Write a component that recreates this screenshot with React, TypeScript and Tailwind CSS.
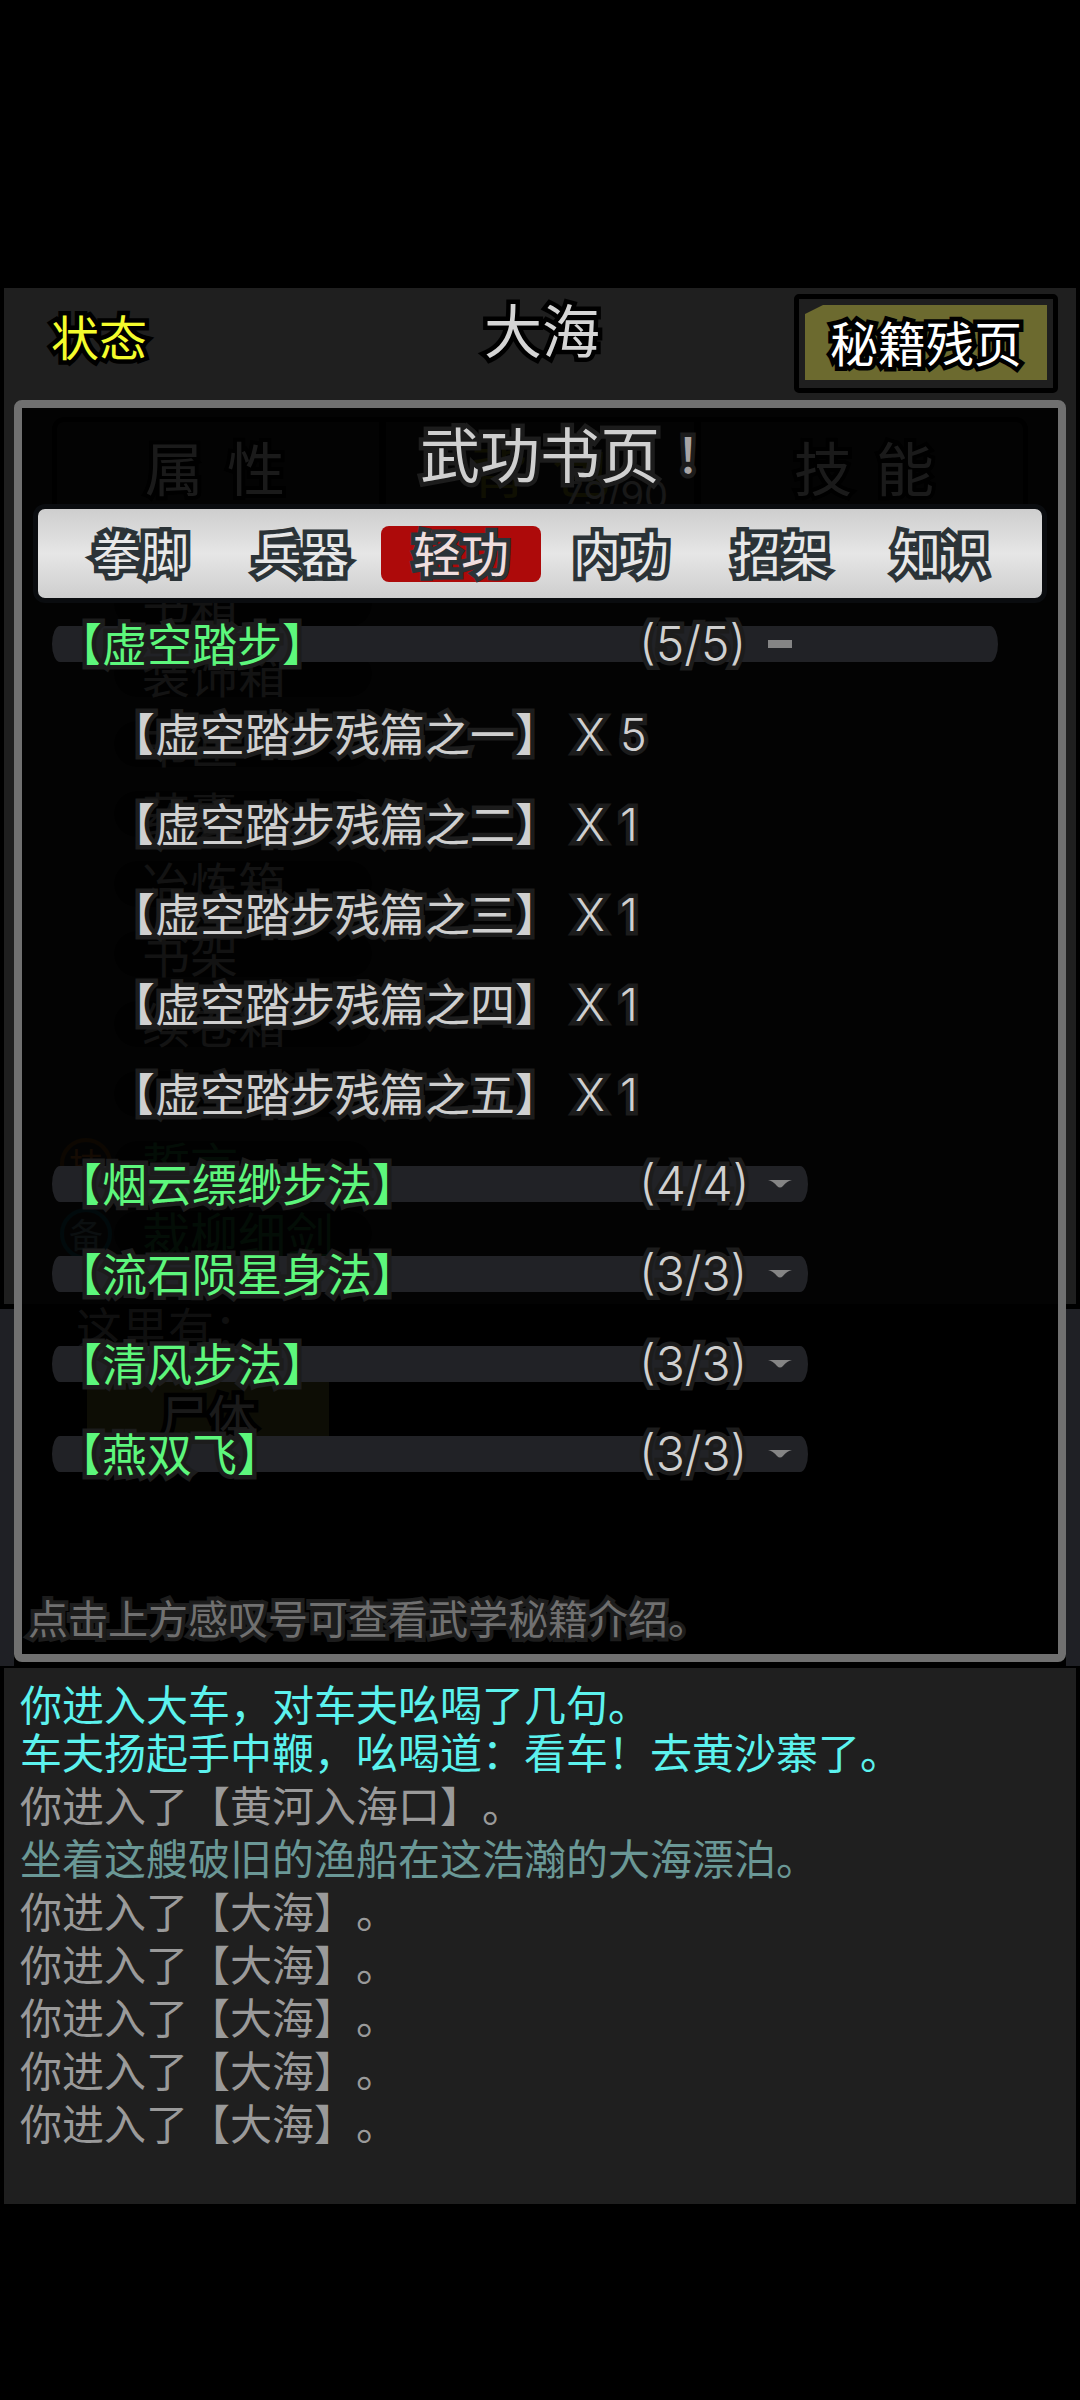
import { useState } from "react";

const outline = "[paint-order:stroke_fill] [text-spacing-trim:space-all] whitespace-nowrap leading-none";

const tabs = ["拳脚", "兵器", "轻功", "内功", "招架", "知识"];

const books = [
  {
    name: "虚空踏步",
    count: "(5/5)",
    pages: [
      { part: "一", owned: 5 },
      { part: "二", owned: 1 },
      { part: "三", owned: 1 },
      { part: "四", owned: 1 },
      { part: "五", owned: 1 },
    ],
  },
  { name: "烟云缥缈步法", count: "(4/4)", pages: [] },
  { name: "流石陨星身法", count: "(3/3)", pages: [] },
  { name: "清风步法", count: "(3/3)", pages: [] },
  { name: "燕双飞", count: "(3/3)", pages: [] },
];

const bag = [
  { label: "书箱", color: "text-[#9a9a9a]" },
  { label: "装饰箱", color: "text-[#9a9a9a]" },
  { label: "书匣", color: "text-[#9a9a9a]" },
  { label: "药囊", color: "text-[#9a9a9a]" },
  { label: "冶炼箱", color: "text-[#9a9a9a]" },
  { label: "书架", color: "text-[#9a9a9a]" },
  { label: "续卷箱", color: "text-[#9a9a9a]" },
  { label: "", color: "text-[#9a9a9a]" },
  { label: "誓言", color: "text-[#1f6a35]", badge: "技", badgeColor: "border-[#6a3c08] text-[#a85a18]" },
  { label: "裁柳细剑", color: "text-[#1f6a35]", badge: "备", badgeColor: "border-[#0c5460] text-[#5a7a86]" },
];

const log = [
  { text: "你进入大车，对车夫吆喝了几句。\n车夫扬起手中鞭，吆喝道：看车！去黄沙寨了。", color: "text-[#5cf2ee]" },
  { text: "你进入了【黄河入海口】。", color: "text-[#9a9a9a]" },
  { text: "坐着这艘破旧的渔船在这浩瀚的大海漂泊。", color: "text-[#6a9896]" },
  { text: "你进入了【大海】。", color: "text-[#9a9a9a]" },
  { text: "你进入了【大海】。", color: "text-[#9a9a9a]" },
  { text: "你进入了【大海】。", color: "text-[#9a9a9a]" },
  { text: "你进入了【大海】。", color: "text-[#9a9a9a]" },
  { text: "你进入了【大海】。", color: "text-[#9a9a9a]" },
];

function PlaqueButton({ label, tone }: { label: string; tone: string }) {
  return (
    <button
      className={`flex h-[99px] w-[264px] shrink-0 rounded-[5px] border-[5px] border-black px-[6px] pt-[6px] pb-[8px] text-[48px] ${tone}`}
    >
      <span className="flex h-full w-full items-center justify-center bg-[#6c6a2f] pb-1 [clip-path:polygon(18px_0,100%_0,100%_100%,0_100%,0_9px)]">
        <span className={`${outline} [-webkit-text-stroke:9px_#000]`}>{label}</span>
      </span>
    </button>
  );
}

function Header() {
  return (
    <header className="grid h-[112px] grid-cols-3 items-start px-[18px]">
      <button className={`${outline} mt-[23px] ml-[29px] justify-self-start text-[48px] text-[#f4fc2c] [-webkit-text-stroke:9px_#000]`}>
        状态
      </button>
      <h1 className={`${outline} mt-[11px] ml-1 justify-self-center text-[58px] text-[#d4d4d4] [-webkit-text-stroke:9px_#000]`}>
        大海
      </h1>
      <div className="mt-[6px] justify-self-end">
        <PlaqueButton label="秘籍残页" tone="text-white" />
      </div>
    </header>
  );
}

function Scene() {
  return (
    <div className="flex flex-col [grid-area:1/1]">
      <div className="mx-1 bg-[#1f1f1f]">
        <Header />
        <div className="mx-[48px] mt-[17px] grid h-[143px] grid-cols-3 rounded-[12px] border-[5px] border-black text-[58px] text-[#d4d4d4]">
          <span className={`${outline} flex justify-center gap-6 pt-[15px] pr-[6px] [-webkit-text-stroke:8px_#000]`}>
            <span>属</span>
            <span>性</span>
          </span>
          <span
            className={`${outline} relative flex justify-center gap-6 border-x-[7px] border-black pt-[17px] text-[#7a7a14]`}
          >
            <span>背</span>
            <span>包</span>
            <span className="absolute top-[54px] right-[26px] font-['Inter',sans-serif] text-[38px] text-[#c4c4c4]">
              79/90
            </span>
          </span>
          <span className={`${outline} flex justify-center gap-6 pt-[15px] pl-1 [-webkit-text-stroke:8px_#000]`}>
            <span>技</span>
            <span>能</span>
          </span>
        </div>
        <ul className="mt-[9px] pb-[35px] pl-[56px] text-[48px]">
          {bag.map((item, i) => (
            <li key={i} className="flex h-[70px] items-center">
              <span className="w-[54px]">
                {item.badge && (
                  <span
                    className={`flex size-[52px] items-center justify-center rounded-full border-[4px] text-[34px] leading-none ${item.badgeColor}`}
                  >
                    {item.badge}
                  </span>
                )}
              </span>
              <span
                className={`${outline} flex h-[46px] w-[258px] items-center rounded-full bg-[#0c0c0c] pb-1 pl-[28px] ${item.color}`}
              >
                {item.label}
              </span>
            </li>
          ))}
        </ul>
      </div>
      <div className="mt-[5px] flex flex-1 bg-[#1f2025] px-[14px]">
        <div className="flex-1 bg-black pl-[62px]">
          <p className="pb-[24px] text-[46px] leading-[34px] text-[#7c7c7c]">这里有：</p>
          <PlaqueButton label="尸体" tone="text-[#d4d4d4]" />
        </div>
      </div>
    </div>
  );
}

function ManualDialog() {
  const [tab, setTab] = useState("轻功");
  const [open, setOpen] = useState<string | null>("虚空踏步");

  return (
    <section
      role="dialog"
      aria-label="武功书页"
      className="z-10 mx-[14px] mt-[112px] mb-1 flex flex-col rounded-[8px] border-8 border-[#707070] bg-black/88 bg-clip-padding [grid-area:1/1]"
    >
      <h2
        className={`${outline} flex h-[96px] items-center justify-center gap-1 pb-2 pl-[52px] text-[60px] text-[#d0d0d0] [-webkit-text-stroke:9px_#1c1c1c]`}
      >
        武功书页
        <button
          aria-label="查看武学秘籍介绍"
          className="font-['Noto_Sans_CJK_JP',sans-serif] text-[48px] leading-none font-medium text-[#a8a5a5] [paint-order:stroke_fill]"
        >
          ！
        </button>
      </h2>

      <div
        role="tablist"
        className="mx-[11px] flex rounded-[12px] border-[5px] border-[#0a0c0f] bg-linear-to-b from-[#cecece] via-[#e6e6e6] to-[#cecece] pt-[17px] pr-[21px] pb-4 pl-[23px]"
      >
        {tabs.map((t) => (
          <button
            key={t}
            role="tab"
            aria-selected={t === tab}
            onClick={() => setTab(t)}
            className={`flex h-[56px] flex-1 items-center justify-center rounded-[8px] pb-[6px] text-[48px] ${
              t === tab ? "bg-[#ad0a0a]" : ""
            }`}
          >
            <span
              className={`${outline} [-webkit-text-stroke:9px_#2b3337] ${t === tab ? "text-[#f0dede]" : "text-[#e8e8e8]"}`}
            >
              {t}
            </span>
          </button>
        ))}
      </div>

      <ul className="mt-[23px] flex flex-col gap-[54px] pl-[30px] text-[45px] text-[#d0d0d0] [-webkit-text-stroke:9px_#1c1c1c]">
        {books.map((book) => {
          const expanded = open === book.name;
          return (
            <li key={book.name} className="flex flex-col gap-[54px]">
              <button
                aria-expanded={expanded}
                onClick={() => setOpen(expanded ? null : book.name)}
                className={`flex h-9 items-center self-start rounded-[8px/18px] bg-[#212226] pl-[5px] text-left ${
                  expanded ? "pr-[206px]" : "pr-4"
                }`}
              >
                <span className={`${outline} w-[582px] pb-1 text-[#5df77c]`}>【{book.name}】</span>
                <span className={`${outline} w-[129px] font-['Inter',sans-serif] text-[48px] font-light`}>
                  {book.count}
                </span>
                {expanded ? (
                  <span className="h-2 w-6 bg-[#858585]" />
                ) : (
                  <svg viewBox="0 0 24 8" className="h-2 w-6 fill-[#858585]">
                    <path d="M0 0H24Q19 1 15 6Q12 9 9 6Q5 1 0 0Z" />
                  </svg>
                )}
              </button>
              {expanded &&
                book.pages.map((page) => (
                  <div key={page.part} className="flex h-9 items-center pl-[58px]">
                    <span className={`${outline} w-[465px] pb-1`}>
                      【{book.name}残篇之{page.part}】
                    </span>
                    <span className={`${outline} w-[45px] font-['Inter',sans-serif] font-light`}>X</span>
                    <span className={`${outline} font-['Inter',sans-serif] font-light`}>{page.owned}</span>
                  </div>
                ))}
            </li>
          );
        })}
      </ul>

      <p
        className={`${outline} mt-[125px] pb-[17px] pl-[6px] text-[40px] text-[#707070] [-webkit-text-stroke:8px_#1c1c1c]`}
      >
        点击上方感叹号可查看武学秘籍介绍。
      </p>
    </section>
  );
}

export default function App() {
  return (
    <main className="min-h-screen bg-black pt-[288px] font-['Noto_Sans_CJK_SC',sans-serif]">
      <div className="grid">
        <Scene />
        <ManualDialog />
      </div>
      <section className="mx-1 mt-0.5 flex flex-col gap-[5px] bg-[#1f1f1f] pt-[11px] pr-[20px] pb-[58px] pl-4 text-[42px] leading-[48px] [text-spacing-trim:space-all]">
        {log.map((line, i) => (
          <p key={i} className={`whitespace-pre-line ${line.color}`}>
            {line.text}
          </p>
        ))}
      </section>
    </main>
  );
}
